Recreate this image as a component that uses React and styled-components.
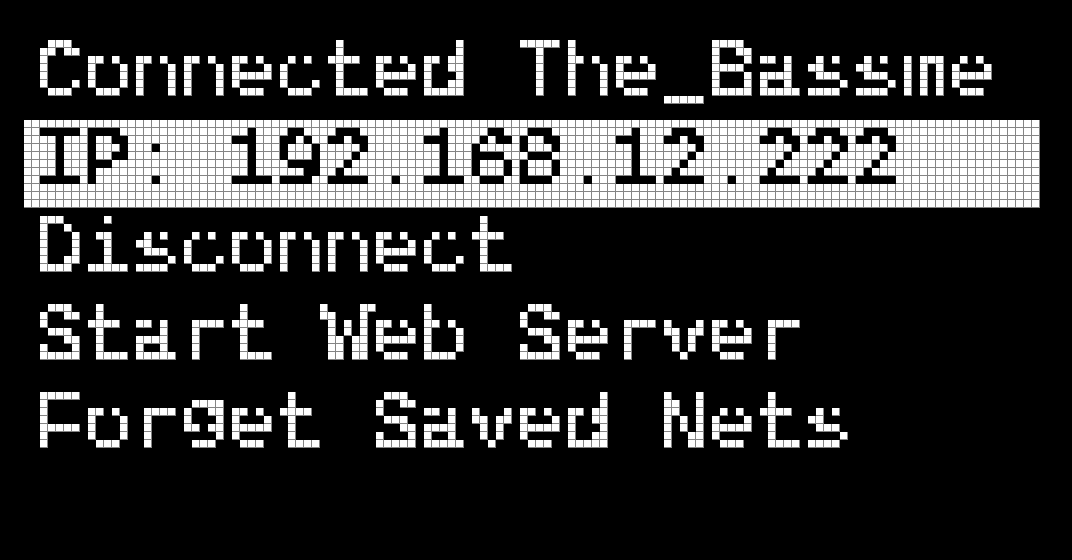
import styled, { createGlobalStyle } from 'styled-components';

const GlobalStyle = createGlobalStyle`
  html, body {
    margin: 0;
    background: #000;
  }
`;

const menu = [
  'Connected The_Bassme',
  'IP: 192.168.12.222',
  'Disconnect',
  'Start Web Server',
  'Forget Saved Nets',
];

// the lcd font keeps every glyph inside the 5x7 box, so lift the ones that hang below
const renderLabel = (label) =>
  label.split(/([_g])/).map((part, i) => {
    if (part === '_') return <Underscore key={i}>_</Underscore>;
    if (part === 'g') return <Descender key={i}>g</Descender>;
    return part;
  });

const App = () => {
  const selected = 1;

  return (
    <Screen>
      <GlobalStyle />
      <FilterDefs aria-hidden='true'>
        {/* snap the rendered text onto the 8px lcd dot matrix */}
        <filter
          id='lcd'
          x='0'
          y='0'
          width='1'
          height='1'
          primitiveUnits='userSpaceOnUse'
          colorInterpolationFilters='sRGB'>
          <feComponentTransfer in='SourceGraphic' result='bw'>
            <feFuncR type='discrete' tableValues='0 1' />
            <feFuncG type='discrete' tableValues='0 1' />
            <feFuncB type='discrete' tableValues='0 1' />
          </feComponentTransfer>
          <feFlood x='3' y='3' width='1' height='1' floodColor='#fff' result='dot' />
          <feComposite in='dot' in2='dot' operator='over' x='0' y='0' width='8' height='8' result='cell' />
          <feTile in='cell' result='dots' />
          <feComposite in='bw' in2='dots' operator='in' result='samples' />
          <feMorphology in='samples' operator='dilate' radius='3' result='blocks' />
          <feOffset in='blocks' dx='1' dy='1' result='o11' />
          <feOffset in='blocks' dx='1' dy='0' result='o10' />
          <feOffset in='blocks' dx='0' dy='1' result='o01' />
          <feMerge>
            <feMergeNode in='o11' />
            <feMergeNode in='o10' />
            <feMergeNode in='o01' />
            <feMergeNode in='blocks' />
          </feMerge>
        </filter>
      </FilterDefs>
      <Lines>
        {menu.map((label, i) => (
          <Row key={label} $selected={i === selected}>
            {renderLabel(label)}
          </Row>
        ))}
      </Lines>
    </Screen>
  );
};

export default App;

const Screen = styled.div`
  position: relative;
  width: 1072px;
  height: 560px;
  overflow: hidden;
  isolation: isolate;
  background: #000;

  &::after {
    content: '';
    position: absolute;
    inset: 0;
    pointer-events: none;
    mix-blend-mode: multiply;
    background-image: linear-gradient(to right, transparent 7px, #858585 7px),
      linear-gradient(to bottom, transparent 7px, #858585 7px);
    background-size: 8px 8px;
  }
`;

const FilterDefs = styled.svg`
  position: absolute;
  width: 0;
  height: 0;
`;

const Lines = styled.div`
  box-sizing: border-box;
  width: 1072px;
  height: 560px;
  padding-top: 32px;
  background: #000;
  filter: url(#lcd);
`;

const Row = styled.div`
  height: 88px;
  margin: 0 32px 0 24px;
  padding-left: 11px;
  font-family: 'Liberation Mono', monospace;
  font-size: 80px;
  line-height: 85px;
  white-space: pre;
  -webkit-text-stroke: 1.6px currentColor;
  color: ${({ $selected }) => ($selected ? '#000' : '#fff')};
  background: ${({ $selected }) => ($selected ? '#fff' : 'transparent')};
`;

const Underscore = styled.span`
  display: inline-block;
  -webkit-text-stroke: 3px currentColor;
  transform: translateY(-4px) scaleX(0.8);
`;

const Descender = styled.span`
  display: inline-block;
  transform-origin: 50% 81px;
  transform: translateY(-17px) scaleY(0.81);
`;
